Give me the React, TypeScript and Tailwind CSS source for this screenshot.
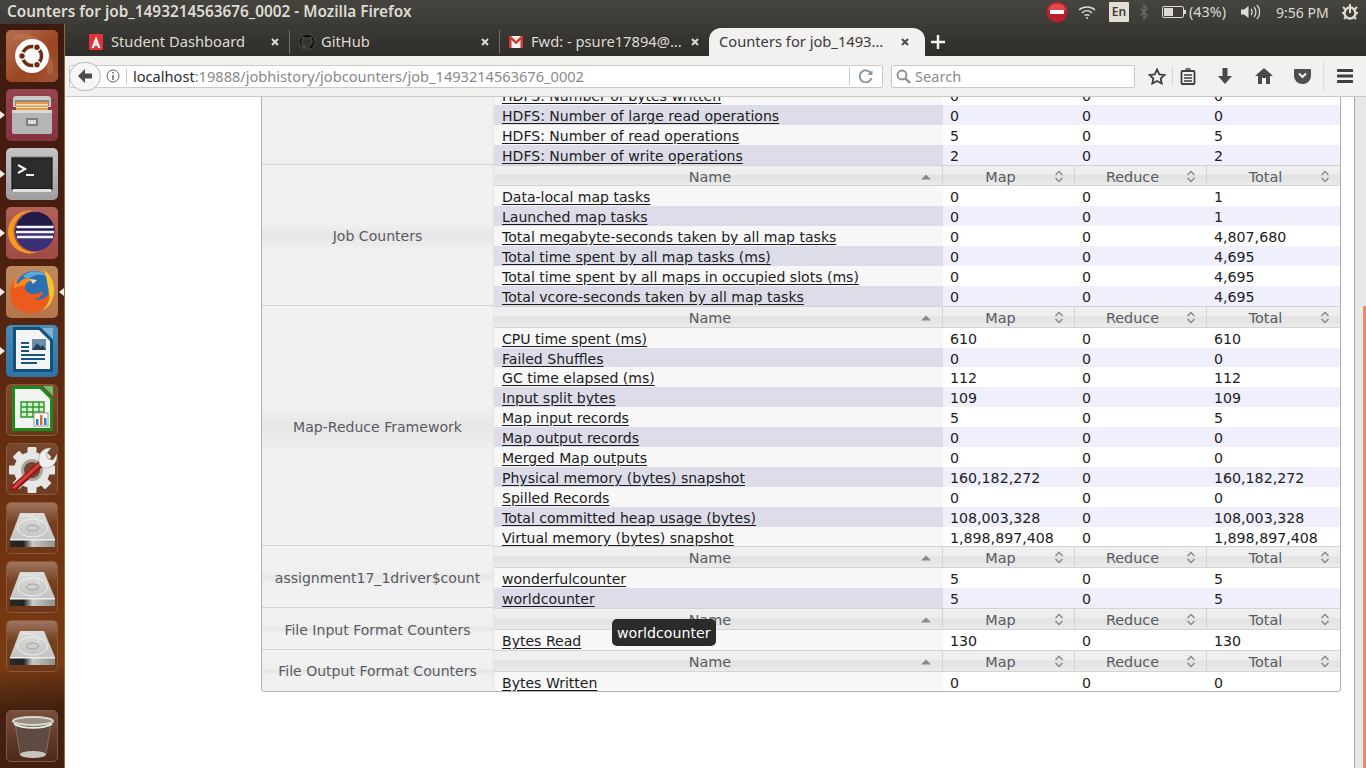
import React from "react";

type Row = [string, string, string, string];
type Group = { label: string; rows: Row[]; header?: boolean };

const groups: Group[] = [
  {
    label: "",
    header: false,
    rows: [
      ["HDFS: Number of bytes written", "0", "0", "0"],
      ["HDFS: Number of large read operations", "0", "0", "0"],
      ["HDFS: Number of read operations", "5", "0", "5"],
      ["HDFS: Number of write operations", "2", "0", "2"],
    ],
  },
  {
    label: "Job Counters",
    rows: [
      ["Data-local map tasks", "0", "0", "1"],
      ["Launched map tasks", "0", "0", "1"],
      ["Total megabyte-seconds taken by all map tasks", "0", "0", "4,807,680"],
      ["Total time spent by all map tasks (ms)", "0", "0", "4,695"],
      ["Total time spent by all maps in occupied slots (ms)", "0", "0", "4,695"],
      ["Total vcore-seconds taken by all map tasks", "0", "0", "4,695"],
    ],
  },
  {
    label: "Map-Reduce Framework",
    rows: [
      ["CPU time spent (ms)", "610", "0", "610"],
      ["Failed Shuffles", "0", "0", "0"],
      ["GC time elapsed (ms)", "112", "0", "112"],
      ["Input split bytes", "109", "0", "109"],
      ["Map input records", "5", "0", "5"],
      ["Map output records", "0", "0", "0"],
      ["Merged Map outputs", "0", "0", "0"],
      ["Physical memory (bytes) snapshot", "160,182,272", "0", "160,182,272"],
      ["Spilled Records", "0", "0", "0"],
      ["Total committed heap usage (bytes)", "108,003,328", "0", "108,003,328"],
      ["Virtual memory (bytes) snapshot", "1,898,897,408", "0", "1,898,897,408"],
    ],
  },
  {
    label: "assignment17_1driver$count",
    rows: [
      ["wonderfulcounter", "5", "0", "5"],
      ["worldcounter", "5", "0", "5"],
    ],
  },
  { label: "File Input Format Counters", rows: [["Bytes Read", "130", "0", "130"]] },
  { label: "File Output Format Counters", rows: [["Bytes Written", "0", "0", "0"]] },
];

const UpDown = () => (
  <svg width="10" height="13" viewBox="0 0 10 13" className="absolute right-[10px] top-[4px]" fill="none" stroke="#8a8a8a" strokeWidth="1.5">
    <path d="M1.5 5 5 1.5 8.5 5" />
    <path d="M1.5 8 5 11.5 8.5 8" />
  </svg>
);

const HeaderCell = ({ label, sorted, last }: { label: string; sorted?: boolean; last?: boolean }) => (
  <div className={`relative flex items-center justify-center border border-l-0 border-[#d3d3d3] pr-[16px] pt-[2px] leading-[18px] ${last ? "border-r-0" : ""}`}>
    <span>{label}</span>
    {sorted ? (
      <svg width="10" height="6" viewBox="0 0 10 6" className="absolute right-[11px] top-[8px]">
        <path d="M0 5.500 5 .5 10 5.500Z" fill="#8a8a8a" />
      </svg>
    ) : (
      <UpDown />
    )}
  </div>
);

const Header = () => (
  <div className="grid h-[21.9px] shrink-0 grid-cols-[449px_132px_132px_133px] grid-rows-[21.9px] bg-[linear-gradient(#f0f0f0_0%,#ededed_45%,#e2e2e2_50%,#e6e6e6_75%,#ececec_100%)] text-[#5a5a62]">
    <HeaderCell label="Name" sorted />
    <HeaderCell label="Map" />
    <HeaderCell label="Reduce" />
    <HeaderCell label="Total" last />
  </div>
);

const DataRow = ({ row, even }: { row: Row; even: boolean }) => (
  <div className={`relative z-10 grid h-[19.9px] shrink-0 grid-cols-[449px_132px_132px_133px] grid-rows-[19.9px] text-[14.2px] leading-[22px] text-[#1c1c1c] ${even ? "bg-[#eff0fc]" : "bg-white"}`}>
    <div className={`whitespace-nowrap pl-[8px] text-[14.06px] ${even ? "bg-[#dddde9]" : "bg-[#f7f7f7]"}`}>
      <span className="underline underline-offset-2">{row[0]}</span>
    </div>
    <div className="pl-[7px]">{row[1]}</div>
    <div className="pl-[7px]">{row[2]}</div>
    <div className="pl-[7px]">{row[3]}</div>
  </div>
);

const GroupBlock = ({ g, first, last }: { g: Group; first: boolean; last: boolean }) => (
  <div className={`flex shrink-0 ${first ? "" : "-mt-px border-t border-[#d4d4d4]"} ${last ? "-mb-px" : ""}`}>
    <div
      className={`flex w-[232px] shrink-0 items-center justify-center border-r border-[#e4e4e4] pt-[2px] text-[14.05px] text-[#5a5a62] ${
        first ? "bg-[#f0f0f0]" : "bg-[linear-gradient(#f1f1f1_0%,#f0f0f0_42%,#e6e6e6_50%,#f1f1f1_62%,#f1f1f1_100%)]"
      }`}
    >
      {g.label}
    </div>
    <div className="flex w-[846px] flex-col">
      {g.header === false ? null : <Header />}
      {g.rows.map((r, i) => (
        <DataRow key={r[0]} row={r} even={i % 2 === 1} />
      ))}
    </div>
  </div>
);

/* ------- launcher icons ------- */
const Tile = ({ bg, children }: { bg: string; children: React.ReactNode }) => (
  <div className={`relative h-[52px] w-[52px] overflow-hidden rounded-[5px] ${bg}`}>
    <svg viewBox="0 0 52 52" width="52" height="52">
      {children}
    </svg>
  </div>
);

const UbuntuIcon = () => (
  <Tile bg="bg-[linear-gradient(135deg,#b5704f,#9b4522_60%,#a4553a)]">
    <path d="M8 8C26 2 46 16 44 44" stroke="#c98a6c" strokeWidth="6" fill="none" opacity=".35" />
    <circle cx="26" cy="26" r="17" fill="#fdfcfb" />
    <circle cx="26" cy="26" r="9.500" fill="none" stroke="#6d2c13" strokeWidth="3.400" />
    <circle cx="16" cy="26" r="3.300" fill="#6d2c13" stroke="#fff" strokeWidth="1.200" />
    <circle cx="31" cy="17.300" r="3.300" fill="#6d2c13" stroke="#fff" strokeWidth="1.200" />
    <circle cx="31" cy="34.700" r="3.300" fill="#6d2c13" stroke="#fff" strokeWidth="1.200" />
  </Tile>
);

const FilesIcon = () => (
  <Tile bg="bg-[linear-gradient(#96444e,#84343f)]">
    <path d="M7 10a3 3 0 0 1 3-3h32a3 3 0 0 1 3 3v8H7Z" fill="#c9c9c7" />
    <rect x="9" y="11" width="34" height="6" fill="#8a8a88" />
    <rect x="10" y="13" width="32" height="8" fill="#e89a4a" />
    <rect x="10" y="15" width="32" height="1.500" fill="#f6e2c4" />
    <rect x="10" y="18" width="32" height="1" fill="#f6e2c4" />
    <path d="M6 23h40v20a2 2 0 0 1-2 2H8a2 2 0 0 1-2-2Z" fill="#b5b5b3" />
    <path d="M6 21h40v3H6Z" fill="#d8d8d6" />
    <rect x="20" y="29" width="12" height="8" rx="1" fill="#7b7b79" />
    <rect x="22" y="31" width="8" height="4" fill="#dcdcda" />
  </Tile>
);

const TerminalIcon = () => (
  <Tile bg="bg-[linear-gradient(#c4c4c4,#9f9f9f)]">
    <rect x="5" y="8" width="42" height="34" rx="1.500" fill="#9a9a9a" />
    <rect x="6" y="10" width="40" height="31" fill="#2c2c2c" stroke="#111" />
    <rect x="7" y="41" width="38" height="3" fill="#e0e0e0" />
    <path d="M12 17 19 21 12 25" stroke="#f2f2f2" strokeWidth="2.200" fill="none" />
    <path d="M20 27H28" stroke="#f2f2f2" strokeWidth="2" />
  </Tile>
);

const EclipseIcon = () => (
  <Tile bg="bg-[linear-gradient(#b0625a,#9f4a46)]">
    <circle cx="23.500" cy="25" r="21.500" fill="#f39a1f" />
    <circle cx="28" cy="24.500" r="20.500" fill="#a5524d" />
    <circle cx="29" cy="24.500" r="19.500" fill="#2c2255" />
    <path d="M29 5A19.500 19.500 0 0 1 48.500 24.500H9.500A19.500 19.500 0 0 1 29 5Z" fill="#221a48" />
    <path d="M29 44A19.500 19.500 0 0 0 48.500 24.500H9.500A19.500 19.500 0 0 0 29 44Z" fill="#3b2f75" />
    <path d="M10.500 20H47.500M10 25H48M11 30H47" stroke="#f3f1fa" strokeWidth="2.300" />
  </Tile>
);

const FirefoxIcon = () => (
  <Tile bg="bg-[linear-gradient(#c08a5e,#b47548)]">
    <circle cx="28" cy="24" r="19" fill="#2a6fb0" />
    <path d="M17 10C24 3 36 4 42 11 34 7 26 9 22 14Z" fill="#5aa8df" />
    <path d="M38 4C45 9 49 17 48 27 47 35 43 41 37 44 42 37 44 29 42 21 41 15 40 9 38 4Z" fill="#fbc02d" />
    <path d="M4 28C4 21 6 16 9 12 9 15 10 17 12 18 15 13 21 11 26 14 24 15 20 16 19 20 18 24 22 28 27 28 31 28 34 27 37 25 37 29 33 33 28 33 33 35 40 33 43 27 46 35 38 47 25 47 13 47 4 39 4 28Z" fill="#ec5b1d" />
    <path d="M9 12C9 15 10 17 12 18 15 13 21 11 26 14 24 15 20 16 19 20 15 19 11 20 8 23 7 19 8 15 9 12Z" fill="#f58a20" />
    <path d="M24 13 31 14 27 18Z" fill="#fdd9a8" />
  </Tile>
);

const WriterIcon = () => (
  <Tile bg="bg-[linear-gradient(#4b8bb6,#2f74a4)]">
    <path d="M7 2H34L47 15V47H7Z" fill="#14527d" />
    <path d="M10 5H33L44 16V44H10Z" fill="#f4f4f4" />
    <path d="M36 3 47 3V14Z" fill="#7fb3d5" />
    <path d="M15 18h8M15 22h8M15 26h8M15 30h24M15 34h24M15 38h16" stroke="#16577f" strokeWidth="2" />
    <rect x="26" y="14" width="14" height="11" fill="#6a8faf" />
    <path d="M26 25 31 18 35 22 37 20 40 25Z" fill="#263f55" />
  </Tile>
);

const CalcIcon = () => (
  <Tile bg="bg-[linear-gradient(#7d4a2c,#6a3a1e)] border border-[#8a5a3c]">
    <path d="M5 1H34L46 13V46H5Z" fill="#1d8a1d" />
    <path d="M8 4H33L43 14V43H8Z" fill="#f2f2f0" />
    <path d="M36 1 46 1V11Z" fill="#70c070" />
    <path d="M14 17H37V32H14ZM14 22H37M14 27H37M20 17V32M26 17V32M32 17V32" stroke="#2a962a" strokeWidth="1.400" fill="#d8f0d0" />
    <rect x="27" y="28" width="14" height="13" fill="#fff" stroke="#999" />
    <rect x="29" y="34" width="2.500" height="6" fill="#2a7fd0" />
    <rect x="33" y="30" width="2.500" height="10" fill="#e86a1c" />
    <rect x="37" y="33" width="2.500" height="7" fill="#2a7fd0" />
  </Tile>
);

const SettingsIcon = () => (
  <Tile bg="bg-[linear-gradient(#85584090,#6e3c22)] border border-[#8a5a3c]">
    <g transform="translate(25 26)" fill="#e6e6e4">
      <circle r="18" />
      {[0, 45, 90, 135, 180, 225, 270, 315].map((a) => (
        <rect key={a} x="-4.500" y="-23" width="9" height="9" rx="1" transform={`rotate(${a})`} />
      ))}
    </g>
    <circle cx="25" cy="26" r="11" fill="#a9a39d" />
    <circle cx="25" cy="26" r="8" fill="#73452c" />
    <path d="M7 44 36 18" stroke="#8e1c1c" strokeWidth="7" strokeLinecap="round" />
    <path d="M7 43.500 35 18" stroke="#d9423a" strokeWidth="3" strokeLinecap="round" />
    <path d="M33 21C29 12 35 3 44 4L39 10 41 15 46 16 50 10C51 19 43 27 35 23Z" fill="#efefed" stroke="#999" strokeWidth=".6" />
  </Tile>
);

const DiskIcon = () => (
  <Tile bg="bg-[linear-gradient(#a07560,#74401f_40%,#6d3618)] border border-[#8a5a3c]">
    <defs>
      <linearGradient id="dk" x1="0" y1="0" x2="0" y2="1">
        <stop offset="0" stopColor="#dcdcda" />
        <stop offset="1" stopColor="#bdbdbb" />
      </linearGradient>
      <linearGradient id="db" x1="0" y1="0" x2="1" y2="0">
        <stop offset="0" stopColor="#2a2a2a" />
        <stop offset=".3" stopColor="#222" />
        <stop offset=".5" stopColor="#c9c9c7" />
        <stop offset="1" stopColor="#8f8f8d" />
      </linearGradient>
    </defs>
    <path d="M13 10H37L48 36V44H3V36Z" fill="url(#dk)" />
    <rect x="3" y="37" width="45" height="7" fill="url(#db)" />
    <path d="M3 36H48V37.500H3Z" fill="#efefed" />
    <ellipse cx="25.500" cy="25" rx="15" ry="9" fill="none" stroke="#efefed" strokeWidth="1" />
    <ellipse cx="25.500" cy="25" rx="6" ry="3" fill="none" stroke="#a0a09e" strokeWidth="1" />
    <path d="M15 13C22 11 34 15 31 22" stroke="#efefed" fill="none" />
  </Tile>
);

const TrashIcon = () => (
  <Tile bg="bg-[linear-gradient(#7a4e3c,#4e2818)] border border-[#7a5a48]">
    <path d="M8 12 13 43H39L44 12Z" fill="#5e4a40" stroke="#80706a" />
    <ellipse cx="26" cy="43.500" rx="13" ry="3.500" fill="#c5c5bd" />
    <ellipse cx="26" cy="10" rx="20" ry="4" fill="#9a8d84" stroke="#d8d8d2" strokeWidth="2" />
    <path d="M7 13C16 18 36 18 45 13" stroke="#ececE6" strokeWidth="2" fill="none" />
  </Tile>
);

const LauncherItem = ({ children, left, right, cls }: { children: React.ReactNode; left?: boolean; right?: boolean; cls?: string }) => (
  <div className={`relative flex h-[52px] justify-center ${cls ?? ""}`}>
    {left && (
      <svg width="5" height="8" viewBox="0 0 5 8" className="absolute left-0 top-[22px]">
        <path d="M0 0 5 4 0 8Z" fill="#f1ece8" />
      </svg>
    )}
    {right && (
      <svg width="5" height="8" viewBox="0 0 5 8" className="absolute right-0 top-[22px]">
        <path d="M5 0 0 4 5 8Z" fill="#f1ece8" />
      </svg>
    )}
    {children}
  </div>
);

const Launcher = () => (
  <div className="flex h-full w-[65px] shrink-0 flex-col gap-[7px] border-r border-[#8a6a3a] bg-[linear-gradient(176deg,#3d1a10_0%,#4a2010_30%,#6d3212_65%,#7a3a10_86%,#5a2c12_89%,#43200f_92%,#43200f_100%)] pt-[6px]">
    <LauncherItem><UbuntuIcon /></LauncherItem>
    <LauncherItem left><FilesIcon /></LauncherItem>
    <LauncherItem left><TerminalIcon /></LauncherItem>
    <LauncherItem left><EclipseIcon /></LauncherItem>
    <LauncherItem left right><FirefoxIcon /></LauncherItem>
    <LauncherItem left><WriterIcon /></LauncherItem>
    <LauncherItem><CalcIcon /></LauncherItem>
    <LauncherItem><SettingsIcon /></LauncherItem>
    <LauncherItem><DiskIcon /></LauncherItem>
    <LauncherItem><DiskIcon /></LauncherItem>
    <LauncherItem><DiskIcon /></LauncherItem>
    <LauncherItem cls="mt-[31px]"><TrashIcon /></LauncherItem>
  </div>
);

/* ------- tray ------- */
const Tray = () => (
  <div className="flex h-6 shrink-0 items-center bg-[linear-gradient(#45443f,#3c3b37)] pl-[7px] text-[#dfdbd2]">
    <span className="text-[15.340px] font-semibold text-[#dfdbd2]">Counters for job_1493214563676_0002 - Mozilla Firefox</span>
    <div className="ml-auto flex h-full items-center">
      <svg width="22" height="22" viewBox="0 0 22 22" className="mr-[10px]">
        <circle cx="11" cy="11" r="10.500" fill="#b8202a" />
        <path d="M2 9A9.500 9.500 0 0 1 20 9Z" fill="#e04a4a" />
        <rect x="4" y="9" width="14" height="4" fill="#fff" />
      </svg>
      <svg width="18" height="14" viewBox="0 0 18 14" fill="none" stroke="#dfdbd2" strokeWidth="1.500" className="mr-[13px]">
        <path d="M1 5C5 1 13 1 17 5" />
        <path d="M4 8C7 5 11 5 14 8" />
        <path d="M6.500 10.500C8 9.500 10 9.500 11.500 10.500" />
        <circle cx="9" cy="13" r="1" fill="#dfdbd2" stroke="none" />
      </svg>
      <div className="mr-[11px] flex h-[20px] w-[20px] items-center justify-center rounded-[1px] bg-[#e3dfd6] text-[12px] font-semibold text-[#3c3b37]">En</div>
      <svg width="8" height="16" viewBox="0 0 8 16" fill="none" stroke="#6f6e69" strokeWidth="1.200" className="mr-[14px]">
        <path d="M0.500 4.500 7 11 4 15V1L7 5 0.500 11.500" />
      </svg>
      <svg width="24" height="14" viewBox="0 0 24 14" className="mr-[3px]">
        <rect x=".5" y="1.500" width="21" height="11" rx="1.500" fill="none" stroke="#dfdbd2" />
        <rect x="2" y="3" width="9" height="8" fill="#dfdbd2" />
        <rect x="22" y="5" width="2" height="4" fill="#dfdbd2" />
      </svg>
      <span className="mr-[11px] w-[40px] whitespace-nowrap text-[14.400px]">(43%)</span>
      <svg width="21" height="16" viewBox="0 0 21 16" fill="none" stroke="#dfdbd2" strokeWidth="1.300" className="mr-[15px]">
        <path d="M1 5.500H4L8.500 2V14L4 10.500H1Z" fill="#dfdbd2" stroke="none" />
        <path d="M11 5C12.500 6.500 12.500 9.500 11 11" />
        <path d="M14 3C16.500 5.500 16.500 10.500 14 13" />
        <path d="M17 1C20.500 5 20.500 11 17 15" />
      </svg>
      <span className="mr-[12px] w-[54px] whitespace-nowrap text-[14px]">9:56 PM</span>
      <svg width="16" height="17" viewBox="0 0 16 17" className="mr-[8px]">
        <circle cx="8" cy="9" r="5.500" fill="none" stroke="#dfdbd2" strokeWidth="2.500" />
        <path d="M8 0V9M1 3 3 5M15 3 13 5M0 9H2M14 9H16M2 15 3.500 13.500M14 15 12.500 13.500" stroke="#dfdbd2" strokeWidth="2" />
      </svg>
    </div>
  </div>
);

/* ------- tabs ------- */
const CloseX = ({ color = "#dfdbd2" }: { color?: string }) => (
  <svg width="8" height="8" viewBox="0 0 8 8" stroke={color} strokeWidth="2" className="shrink-0">
    <path d="M1 1 7 7M7 1 1 7" />
  </svg>
);

const InactiveTab = ({ icon, label, w }: { icon: React.ReactNode; label: string; w: string }) => (
  <div className={`flex h-full items-center text-[14.700px] text-[#dfdbd2] ${w}`}>
    <span className="flex w-[22px] shrink-0 justify-start">{icon}</span>
    <span className="flex-1 whitespace-nowrap pb-[2px]">{label}</span>
    <CloseX />
  </div>
);

const Sep = () => <div className="ml-[10px] mr-[9px] h-[24px] w-px shrink-0 bg-[#6f6e69]" />;

const Tabs = () => (
  <div className="flex h-[32px] shrink-0 items-end bg-[linear-gradient(#3c3b37,#2e2d29)] pl-[24px]">
    <div className="flex h-[28px] items-center">
      <InactiveTab
        w="w-[190px]"
        label="Student Dashboard"
        icon={
          <svg width="14" height="16" viewBox="0 0 14 16">
            <path d="M0 0H14V16H0Z" fill="#e23237" />
            <path d="M7 2 2.500 14H5L5.800 11.500H8.200L9 14H11.500ZM6.400 9.500 7 7.500 7.600 9.500Z" fill="#fff" fillRule="evenodd" />
          </svg>
        }
      />
      <Sep />
      <InactiveTab
        w="w-[190px]"
        label="GitHub"
        icon={
          <svg width="16" height="16" viewBox="0 0 16 16" fill="#111" stroke="#8a8a86" strokeWidth=".5">
            <path d="M8 0C3.580 0 0 3.580 0 8c0 3.540 2.290 6.530 5.470 7.590.4.070.55-.17.55-.38 0-.19-.01-.82-.01-1.490-2.010.37-2.530-.49-2.690-.94-.09-.23-.48-.94-.82-1.130-.28-.15-.68-.52-.01-.53.630-.01 1.080.580 1.230.820.720 1.210 1.870.870 2.330.660.070-.520.280-.870.510-1.070-1.780-.2-3.640-.890-3.640-3.950 0-.870.310-1.590.820-2.150-.080-.2-.360-1.020.080-2.120 0 0 .670-.21 2.200.820.640-.180 1.320-.270 2-.270s1.360.090 2 .270c1.530-1.040 2.200-.820 2.200-.820.440 1.100.160 1.920.080 2.120.510.560.820 1.270.820 2.150 0 3.070-1.870 3.750-3.650 3.950.290.250.540.730.540 1.480 0 1.070-.010 1.930-.010 2.200 0 .210.150.460.550.380A8.010 8.010 0 0 0 16 8c0-4.420-3.580-8-8-8Z" />
          </svg>
        }
      />
      <Sep />
      <InactiveTab
        w="w-[190px]"
        label="Fwd: - psure17894@..."
        icon={
          <svg width="14" height="12" viewBox="0 0 14 12">
            <rect width="14" height="12" fill="#f2f2f2" />
            <path d="M0 0H2L7 5 12 0H14V12H11.500V4L7 8.200 2.500 4V12H0Z" fill="#d33a2c" />
          </svg>
        }
      />
    </div>
    <div className="ml-[10px] flex h-[28px] w-[216px] items-center rounded-t-[12px] bg-[#f2f1f0] pl-[10px] pr-[16px] text-[14.700px] text-[#3c3b37]">
      <span className="flex-1 whitespace-nowrap pb-[2px]">Counters for job_1493...</span>
      <CloseX color="#4c4b47" />
    </div>
    <svg width="14" height="14" viewBox="0 0 14 14" stroke="#f2f1f0" strokeWidth="2.500" className="mb-[7px] ml-[6px]">
      <path d="M7 0V14M0 7H14" />
    </svg>
  </div>
);

/* ------- nav bar ------- */
const NavBar = () => (
  <div className="flex h-[41px] shrink-0 items-center border-b border-[#c8c8c6] bg-[#f2f1f0] pl-[4px] text-[14.600px]">
    <div className="flex h-[23px] w-[814px] items-center rounded-[2px] border border-[#c9c9c7] bg-white">
      <div className="z-10 -ml-px flex h-[29px] w-[32px] shrink-0 items-center justify-center rounded-full border border-[#b8b8b6] bg-[#f7f6f5]">
        <svg width="14" height="14" viewBox="0 0 14 14" fill="#4c4b47">
          <path d="M7 0 0 7 7 14V9.500H14V4.500H7Z" />
        </svg>
      </div>
      <svg width="14" height="14" viewBox="0 0 14 14" className="ml-[5px] shrink-0" fill="none" stroke="#5c5c5c">
        <circle cx="7" cy="7" r="6" />
        <path d="M7 6V11M7 3V4.500" strokeWidth="1.400" />
      </svg>
      <div className="ml-[6px] h-[15px] w-px bg-[#c9c9c7]" />
      <span className="ml-[6px] flex-1 whitespace-nowrap pt-[1px] text-[#8a8a88]">
        <span className="text-[#2b2b2b]">localhost</span>:19888/jobhistory/jobcounters/job_1493214563676_0002
      </span>
      <div className="h-[18px] w-px bg-[#c9c9c7]" />
      <svg width="14" height="14" viewBox="0 0 14 14" fill="none" stroke="#8a98a6" strokeWidth="2" className="mx-[9px]">
        <path d="M12 4.500A6 6 0 1 0 12.500 9" />
        <path d="M13.500 1V6H8.500Z" fill="#8a98a6" stroke="none" />
      </svg>
    </div>
    <div className="ml-[8px] flex h-[23px] w-[244px] items-center rounded-[2px] border border-[#c9c9c7] bg-white pl-[4px] text-[#8a8a88]">
      <svg width="15" height="15" viewBox="0 0 15 15" fill="none" stroke="#8c8c8c" strokeWidth="1.800">
        <circle cx="6" cy="6" r="4.500" />
        <path d="M9.500 9.500 14 14" strokeWidth="2.400" />
      </svg>
      <span className="ml-[4px] pt-[1px]">Search</span>
    </div>
    <svg width="18" height="17" viewBox="0 0 18 17" className="ml-[13px] shrink-0" fill="none" stroke="#3f3f3f" strokeWidth="1.800">
      <path d="M9 1.500 11.300 6.300 16.500 7 12.700 10.500 13.700 15.500 9 13 4.300 15.500 5.300 10.500 1.500 7 6.700 6.300Z" />
    </svg>
    <div className="ml-[6px] h-[18px] w-px shrink-0 bg-[#d3d3d1]" />
    <svg width="16" height="17" viewBox="0 0 16 17" className="ml-[7px] shrink-0" fill="none" stroke="#3f3f3f" strokeWidth="1.800">
      <rect x="1.500" y="3" width="13" height="13" rx="1" />
      <path d="M4 7H12M4 10H12M4 13H12M5.500 1H10.500" strokeWidth="1.500" />
    </svg>
    <svg width="16" height="18" viewBox="0 0 16 18" className="ml-[21px] shrink-0" fill="#4a4a4a">
      <path d="M5.500 1H10.500V9H15L8 17 1 9H5.500Z" />
    </svg>
    <svg width="18" height="16" viewBox="0 0 18 16" className="ml-[22px] shrink-0" fill="#4a4a4a">
      <path d="M9 0 18 8H15V16H11V10H7V16H3V8H0Z" />
    </svg>
    <svg width="17" height="16" viewBox="0 0 17 16" className="ml-[21px] shrink-0">
      <path d="M1 1H16a1 1 0 0 1 1 1V8A8.500 8 0 0 1 0 8V2a1 1 0 0 1 1-1Z" fill="#4f4f4f" />
      <path d="M5 5.500 8.500 9 12 5.500" fill="none" stroke="#f2f1f0" strokeWidth="2" />
    </svg>
    <div className="ml-[12px] h-[31px] w-px shrink-0 bg-[#dcdcda]" />
    <svg width="16" height="14" viewBox="0 0 16 14" className="ml-[13px] shrink-0" fill="#3f3f3f">
      <rect width="16" height="3" rx=".5" />
      <rect y="5.500" width="16" height="3" rx=".5" />
      <rect y="11" width="16" height="3" rx=".5" />
    </svg>
  </div>
);

const Scrollbar = () => (
  <div className="flex h-full w-[11px] shrink-0 flex-col bg-[#e8e8e8]">
    <div className="ml-auto mt-[209px] w-[3px] flex-1 bg-[#ee8866]" />
  </div>
);

export default function App() {
  return (
    <div className="flex h-[768px] w-[1366px] flex-col overflow-hidden bg-white font-['Noto_Sans',sans-serif]">
      <Tray />
      <div className="flex min-h-0 flex-1">
        <Launcher />
        <div className="flex min-w-0 flex-1 flex-col">
          <Tabs />
          <NavBar />
          <div className="flex min-h-0 flex-1">
            <div className="relative min-w-0 flex-1 overflow-hidden border-r border-[#a8a8a8] pl-[196px] font-['DejaVu_Sans',sans-serif] text-[14.400px]">
              <div className="-mt-[12px] flex w-[1080px] flex-col overflow-hidden rounded-b-[4px] border-x border-b border-[#b0b0b0]">
                {groups.map((g, i) => (
                  <GroupBlock key={i} g={g} first={i === 0} last={i === groups.length - 1} />
                ))}
              </div>
              <div className="absolute z-20 left-[547px] top-[522px] rounded-[5px] bg-[#2b2b2b] px-[5px] pb-[3px] pt-[5px] text-[14.200px] leading-[19px] text-white">
                worldcounter
              </div>
            </div>
            <Scrollbar />
          </div>
        </div>
      </div>
    </div>
  );
}
